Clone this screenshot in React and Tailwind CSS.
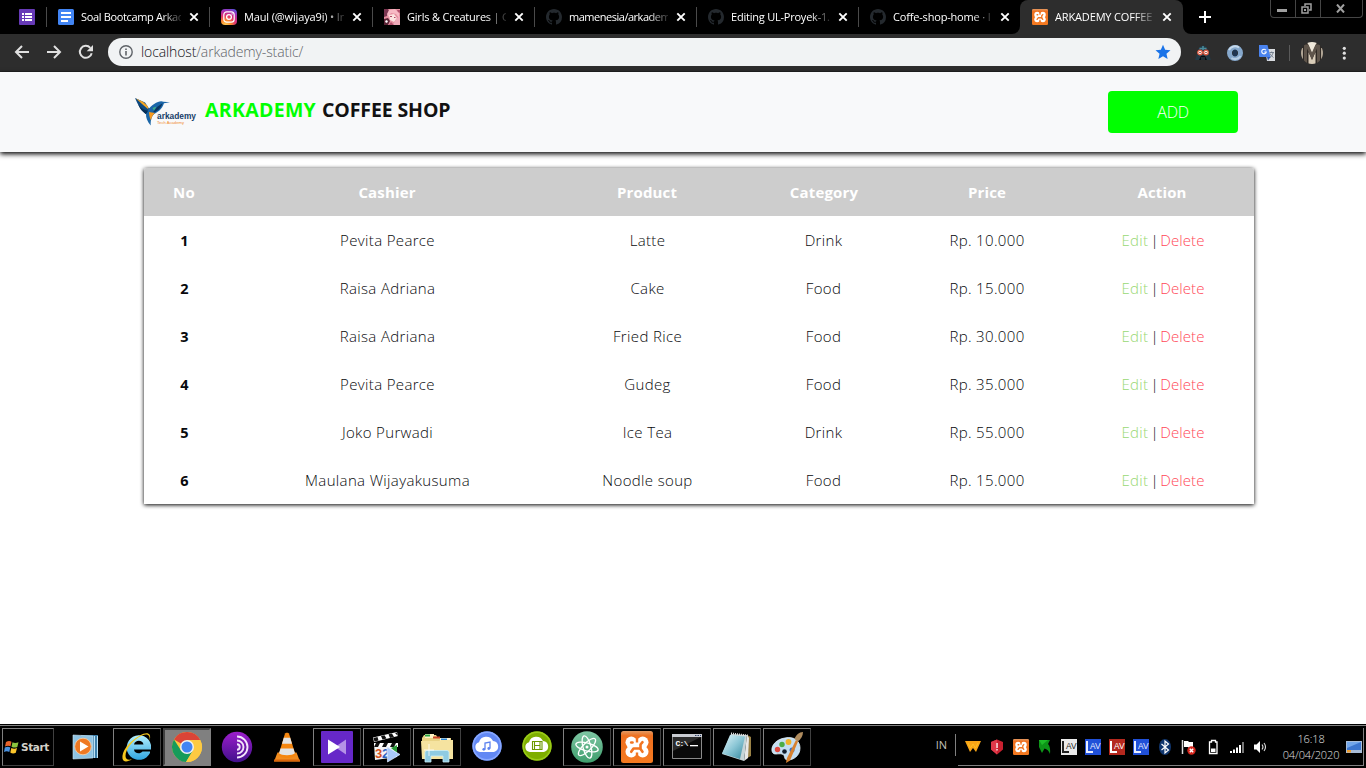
import React from "react";

/* ---------- shared glyphs ---------- */

const Svg = ({ s = 16, vb = "0 0 16 16", className = "", children }) => (
  <svg width={s} height={s} viewBox={vb} className={"shrink-0 " + className}>
    {children}
  </svg>
);

const GITHUB =
  "M8 0C3.58 0 0 3.58 0 8c0 3.54 2.29 6.53 5.47 7.59.4.07.55-.17.55-.38 0-.19-.01-.82-.01-1.49-2.01.37-2.53-.49-2.69-.94-.09-.23-.48-.94-.82-1.13-.28-.15-.68-.52-.01-.53.63-.01 1.08.58 1.23.82.72 1.21 1.87.87 2.33.66.07-.52.28-.87.51-1.07-1.78-.2-3.64-.89-3.64-3.95 0-.87.31-1.59.82-2.15-.08-.2-.36-1.02.08-2.12 0 0 .67-.21 2.2.82.64-.18 1.32-.27 2-.27s1.36.09 2 .27c1.53-1.04 2.2-.82 2.2-.82.44 1.1.16 1.92.08 2.12.51.56.82 1.27.82 2.15 0 3.07-1.87 3.75-3.65 3.95.29.25.54.73.54 1.48 0 1.07-.01 1.93-.01 2.2 0 .21.15.46.55.38A8.01 8.01 0 0 0 16 8c0-4.42-3.58-8-8-8z";

const FormsIcon = () => (
  <Svg>
    <rect width="16" height="16" rx="1" fill="#673ab7" />
    <path d="M3 4h2v2H3zM6 4h7v2H6zM3 7h2v2H3zM6 7h7v2H6zM3 10h2v2H3zM6 10h7v2H6z" fill="#fff" />
  </Svg>
);
const DocsIcon = () => (
  <Svg>
    <rect width="16" height="16" rx="1.5" fill="#4285f4" />
    <path d="M3 3h10v2H3zM3 7h10v2H3zM3 11h7v2H3z" fill="#fff" />
  </Svg>
);
const InstaIcon = () => (
  <Svg>
    <defs>
      <radialGradient id="ig" cx=".28" cy="1.05" r="1.15">
        <stop offset="0" stopColor="#ffd85c" />
        <stop offset=".3" stopColor="#fb8a2d" />
        <stop offset=".55" stopColor="#e0356c" />
        <stop offset=".8" stopColor="#b02bb0" />
        <stop offset="1" stopColor="#5b4fd8" />
      </radialGradient>
    </defs>
    <rect width="16" height="16" rx="4" fill="url(#ig)" />
    <rect x="2.8" y="2.8" width="10.4" height="10.4" rx="3" fill="none" stroke="#fff" strokeWidth="1.2" />
    <circle cx="8" cy="8" r="2.4" fill="none" stroke="#fff" strokeWidth="1.3" />
    <circle cx="11.1" cy="4.9" r=".7" fill="#fff" />
  </Svg>
);
const GirlIcon = () => (
  <Svg>
    <rect width="16" height="16" fill="#e58fa0" />
    <path d="M0 0h4l2 3-3 4-3 1z" fill="#7a3550" />
    <path d="M5 1l6-1 4 4v5l-3-4-5-1-3 4-1-3z" fill="#f7b9c4" />
    <path d="M5 6l5-1 3 4-3 4-4-2z" fill="#fbe3e0" />
    <path d="M0 10l4-1 2 3-2 4H0z" fill="#5a2335" />
    <path d="M2 11l2 1-1 2-2-1z" fill="#fff" />
    <path d="M12 10l4-3v9H9z" fill="#efabba" />
    <path d="M6 7h2v1H6zM10 8h1.500v1H10z" fill="#b04665" />
    <path d="M13 1h3v3l-2-1zM7 13l3 3H5z" fill="#b1506c" />
  </Svg>
);
const GithubIcon = () => (
  <Svg>
    <path d={GITHUB} fill="#24292e" />
  </Svg>
);

const Xampp = ({ s = 16, id }) => (
  <Svg s={s} vb="0 0 32 32">
    <defs>
      <linearGradient id={id} x1="0" y1="0" x2="0" y2="1">
        <stop offset="0" stopColor="#e39a63" />
        <stop offset=".15" stopColor="#ee7020" />
        <stop offset="1" stopColor="#f57a20" />
      </linearGradient>
    </defs>
    <rect width="32" height="32" rx="2.500" fill={"url(#" + id + ")"} />
    <g fill="#fff">
      <circle cx="10.300" cy="11.300" r="5.800" />
      <circle cx="21.700" cy="11.300" r="5.800" />
      <circle cx="10.300" cy="20.700" r="5.800" />
      <circle cx="21.700" cy="20.700" r="5.800" />
      <path d="M9 12h14v8H9z" />
    </g>
    <g fill="none" stroke="#f27522" strokeWidth="2.600" strokeLinecap="round" strokeLinejoin="round">
      <path d="M10.200 11.500h1.300" />
      <path d="M21.500 11.200L19.500 13.500V18L21.500 20.800" />
      <path d="M10.200 20.800L12.500 17.500H19" />
    </g>
    <path d="M16 5v6.500M16 21.500v6" stroke="#f27522" strokeWidth="2.400" />
  </Svg>
);

const CloseX = () => (
  <Svg s={10} vb="0 0 10 10">
    <path d="M1.300 1.300l7.400 7.400M8.700 1.300L1.300 8.700" stroke="#fff" strokeWidth="1.900" />
  </Svg>
);

/* ---------- browser ---------- */

const tabs = [
  { icon: <DocsIcon />, title: "Soal Bootcamp Arkad", w: "w-[163px]", t: "w-[100px]", ls: "tracking-[-0.35px]" },
  { icon: <InstaIcon />, title: "Maul (@wijaya9i) • In", w: "w-[163px]", t: "w-[100px]", ls: "tracking-[-0.14px]" },
  { icon: <GirlIcon />, title: "Girls & Creatures | G", w: "w-[162px]", t: "w-[99px]", ls: "tracking-[-0.2px]" },
  { icon: <GithubIcon />, title: "mamenesia/arkadem", w: "w-[162px]", t: "w-[99px]", ls: "tracking-[-0.48px]" },
  { icon: <GithubIcon />, title: "Editing UL-Proyek-1.", w: "w-[162px]", t: "w-[99px]", ls: "tracking-[-0.22px]" },
  { icon: <GithubIcon />, title: "Coffe-shop-home · I", w: "w-[162px]", t: "w-[99px]", ls: "tracking-[-0.18px]", last: true },
];

const fade = "[mask-image:linear-gradient(to_right,#000_80%,rgba(0,0,0,0.2)_99%)]";

function Tab({ icon, title, w, t, ls, last }) {
  return (
    <div className={"flex h-[34px] shrink-0 items-center pl-[11px] " + w}>
      {icon}
      <div className={"ml-[7px] whitespace-nowrap text-[11px] leading-[18px] text-white " + t + " " + ls + " " + fade}>{title}</div>
      <div className="ml-[8px] flex">
        <CloseX />
      </div>
      {!last && <div className="ml-auto h-5 w-px bg-[#4a4a4a]" />}
    </div>
  );
}

function TabStrip() {
  return (
    <div className="flex h-[34px] bg-black">
      <div className="flex w-[47px] shrink-0 items-center pl-[19px]">
        <FormsIcon />
        <div className="ml-auto h-5 w-px bg-[#4a4a4a]" />
      </div>
      {tabs.map((t) => (
        <Tab key={t.title} {...t} />
      ))}
      <div className="relative -ml-px flex h-[34px] w-[163px] shrink-0 items-center rounded-t-[8px] bg-[#2d2d2d] pl-[12px]">
        <Svg s={8} vb="0 0 8 8" className="absolute -left-[8px] bottom-0">
          <path d="M8 0v8H0a8 8 0 0 0 8-8z" fill="#2d2d2d" />
        </Svg>
        <Svg s={8} vb="0 0 8 8" className="absolute -right-[8px] bottom-0">
          <path d="M0 0v8h8a8 8 0 0 1-8-8z" fill="#2d2d2d" />
        </Svg>
        <Xampp id="xa" />
        <div className={"ml-[7px] w-[99px] whitespace-nowrap text-[11px] leading-[18px] tracking-[-0.15px] text-white " + fade}>
          ARKADEMY COFFEE
        </div>
        <div className="ml-[8px] flex">
          <CloseX />
        </div>
      </div>
      <div className="flex w-[44px] items-center justify-center">
        <Svg s={12} vb="0 0 12 12">
          <path d="M6 0v12M0 6h12" stroke="#fff" strokeWidth="2" />
        </Svg>
      </div>
      <div className="ml-auto mr-[3px] flex h-[18px] w-[93px] rounded-b-[4px] border border-t-0 border-[#454545]">
        <div className="flex w-[25px] justify-center border-r border-[#454545] pr-[2px]">
          <div className="mt-[9px] h-[3px] w-[10px] bg-[#a0a0a0]" />
        </div>
        <div className="flex w-[25px] justify-center border-r border-[#454545] pr-[3px] pt-[3px]">
          <Svg s={11} vb="0 0 11 11">
            <path d="M4 3V1h6v6H8M1 4h6v6H1z" fill="none" stroke="#a0a0a0" strokeWidth="1.500" />
            <path d="M3 6h2v2H3z" fill="#a0a0a0" />
          </Svg>
        </div>
        <div className="flex flex-1 justify-center pr-[2px] pt-[4px]">
          <Svg s={9} vb="0 0 9 9">
            <path d="M1 .5l7 8M8 .5l-7 8" stroke="#a0a0a0" strokeWidth="2" />
          </Svg>
        </div>
      </div>
    </div>
  );
}

function Toolbar() {
  return (
    <div className="flex h-[38px] items-center border-b border-[#242424] bg-[#2d2d2d]">
      <Svg className="mb-px ml-[14px]">
        <path d="M15 8H2.500M8 2L2 8l6 6" fill="none" stroke="#e0e0e0" strokeWidth="2" />
      </Svg>
      <Svg className="mb-px ml-[16px]">
        <path d="M1 8h12.500M8 2l6 6-6 6" fill="none" stroke="#e0e0e0" strokeWidth="2" />
      </Svg>
      <Svg className="mb-px ml-[16px]">
        <path d="M13.700 9.200A6 6 0 1 1 12.300 3.800" fill="none" stroke="#e0e0e0" strokeWidth="2" />
        <path d="M15 1v6.300H8.700z" fill="#e0e0e0" />
      </Svg>
      <div className="mb-px ml-[14px] flex h-7 w-[1073px] items-center rounded-full bg-[#f1f3f4] pl-[11px] pr-[10px]">
        <Svg s={14} vb="0 0 14 14">
          <circle cx="7" cy="7" r="6.200" fill="none" stroke="#5f6368" strokeWidth="1.400" />
          <path d="M6.200 6h1.600v4.500H6.200zM6.200 3.500h1.600V5H6.200z" fill="#5f6368" />
        </Svg>
        <div className="ml-[8px] whitespace-nowrap text-[14px] font-light leading-[20px] tracking-[-0.12px] text-[#5f6368]">
          <span className="text-[#101114]">localhost</span>/arkademy-static/
        </div>
        <Svg className="ml-auto">
          <path d="M8 .8l2.150 4.950 5.350.5-4.050 3.550 1.200 5.250L8 12.250l-4.650 2.800 1.200-5.250L.5 6.250l5.350-.5z" fill="#1a73e8" />
        </Svg>
      </div>
      <Svg className="ml-[14px]">
        <path d="M3 6C3.500 2 6 .8 8 .8S12.500 2 13 6l3 9H0z" fill="#223945" />
        <path d="M8 1v4M4.500 3.500h7" stroke="#4a8c9c" strokeWidth="1.500" />
        <circle cx="5" cy="7.500" r="2.300" fill="#fff" stroke="#e05a40" strokeWidth="1.300" />
        <circle cx="11" cy="7.500" r="2.300" fill="#fff" stroke="#e05a40" strokeWidth="1.300" />
        <circle cx="5" cy="7.500" r=".8" fill="#8d2c1c" />
        <circle cx="11" cy="7.500" r=".8" fill="#8d2c1c" />
        <path d="M6 11h4l2 4H4z" fill="#080c10" />
        <path d="M7 12v3M9 12v3" stroke="#52707a" strokeWidth=".7" />
      </Svg>
      <Svg className="ml-[16px]">
        <circle cx="8" cy="8" r="5.500" fill="none" stroke="#86a8cc" strokeWidth="5" />
        <path d="M2 5a7 7 0 0 1 10-2.500" fill="none" stroke="#c6d9ec" strokeWidth="2" />
        <path d="M13.500 11a6.500 6.500 0 0 1-9 2" fill="none" stroke="#b5cce4" strokeWidth="2" />
        <ellipse cx="8" cy="8" rx="2.500" ry="3.500" fill="#1f3552" />
      </Svg>
      <Svg className="ml-[16px]">
        <path d="M6 4h10v12H8z" fill="#d9dce0" />
        <path d="M0 0h8.500l3 12H1a1 1 0 0 1-1-1z" fill="#4a83ee" />
        <path d="M8 12h3.500L9 15.500z" fill="#2a56b8" />
        <path d="M7 5.300A2.300 2.300 0 1 0 7.300 7H5.300" fill="none" stroke="#fff" strokeWidth="1.100" />
        <path d="M10.500 7.500h4.500M12.700 6.500v1M14 8c-.5 2-1.700 3.500-3 4.500M11 8.500c.7 1.700 2 3 3.500 4" fill="none" stroke="#6d7888" strokeWidth=".9" />
      </Svg>
      <div className="ml-[14px] h-4 w-px bg-[#5a5a5a]" />
      <Svg s={22} vb="0 0 22 22" className="ml-[11px]">
        <clipPath id="av">
          <circle cx="11" cy="11" r="11" />
        </clipPath>
        <g clipPath="url(#av)">
          <path d="M0 0h22v22H0z" fill="#2f2924" />
          <path d="M0 6h2v12H0zM20 6h2v12h-2z" fill="#b0a595" />
          <path d="M6 0h10l-5 12z" fill="#efe8da" />
          <path d="M7.500 10v12h7V10L11 18z" fill="#d8ccb8" />
          <path d="M4.500 21V4h2L11 14l4.500-10h2v17" fill="none" stroke="#5f554b" strokeWidth="3" />
        </g>
      </Svg>
      <Svg className="ml-[13px]">
        <circle cx="8.300" cy="3.300" r="1.600" fill="#e0e0e0" />
        <circle cx="8.300" cy="8.200" r="1.600" fill="#e0e0e0" />
        <circle cx="8.300" cy="13.100" r="1.600" fill="#e0e0e0" />
      </Svg>
    </div>
  );
}

/* ---------- page ---------- */

const rows = [
  ["1", "Pevita Pearce", "Latte", "Drink", "Rp. 10.000"],
  ["2", "Raisa Adriana", "Cake", "Food", "Rp. 15.000"],
  ["3", "Raisa Adriana", "Fried Rice", "Food", "Rp. 30.000"],
  ["4", "Pevita Pearce", "Gudeg", "Food", "Rp. 35.000"],
  ["5", "Joko Purwadi", "Ice Tea", "Drink", "Rp. 55.000"],
  ["6", "Maulana Wijayakusuma", "Noodle soup", "Food", "Rp. 15.000"],
];
const heads = ["No", "Cashier", "Product", "Category", "Price", "Action"];
const cols = "grid grid-cols-[80px_326px_194px_160px_166px_184px] h-12 items-center text-center";

function Logo() {
  return (
    <svg width="62" height="30" viewBox="0 0 62 30" className="shrink-0">
      <path d="M0 1L10 5.500l4 6 3.500-2-1 8-6-.500C6 13 3 8 0 1z" fill="#0e4a80" />
      <path d="M1 1.500l7 3.200 4.500 4.300 1 3.500L7 7z" fill="#f6a623" />
      <path d="M3 7c2 5 4 7.500 8 10l2-3C9 13 6 11 3 7z" fill="#072f57" />
      <path d="M12 19c0-8 6-12 11-14 2-1 4-1 5.500-.3L35 5.300l-6 .9c-2 6-6 8.800-10 10.800z" fill="#1a66a8" />
      <path d="M17.500 16c5-1.500 8.500-5 10-9.800L22 10z" fill="#0b3460" />
      <path d="M17.500 11l4-1.500-2.500 4z" fill="#3fae86" />
      <path d="M11 17l3-3.500 6 2.500c-3 3-4.500 6-4.300 12.500-3.500-4-4.900-8-4.700-11.500z" fill="#1a65a6" />
      <path d="M14 15l6 1c-2.500 2-3.500 4-4 7.500-1.500-3-2-6-2-8.500z" fill="#f79a20" />
      <text x="22" y="21.500" textLength="39" lengthAdjust="spacingAndGlyphs" fontFamily="Liberation Sans" fontWeight="700" fontSize="9" fill="#163e68">
        arkademy
      </text>
      <text x="22" y="26.700" textLength="27" lengthAdjust="spacingAndGlyphs" fontFamily="Liberation Sans" fontSize="4.300" fill="#f08b2c">
        Tech Academy
      </text>
    </svg>
  );
}

function Page() {
  return (
    <main className="flex h-[652px] flex-col bg-white text-[#212529]">
      <nav className="z-10 flex h-20 shrink-0 items-center justify-between bg-[#f8f9fa] pl-[135px] pr-[128px] shadow-[0_2px_5px_#000]">
        <div className="flex items-center">
          <Logo />
          <div className="mb-[4px] ml-[8px] flex whitespace-nowrap text-[19.500px] font-bold leading-[30px] text-[#121212]">
            <span className="tracking-[0.3px] text-[#00ff00]">ARKADEMY</span>
            <span className="ml-[6px] tracking-[-0.12px]">COFFEE SHOP</span>
          </div>
        </div>
        <button className="h-[42px] w-[130px] rounded-[4px] bg-[#00ff00] text-[16px] font-light tracking-[-0.3px] text-white">ADD</button>
      </nav>
      <div className="ml-[144px] mt-4 w-[1110px] overflow-hidden rounded-t-[2px] shadow-[0_1px_4px_#000]">
        <div className={cols + " bg-[#cdcdcd] text-[15px] font-bold tracking-[0.15px] text-white"}>
          {heads.map((h) => (
            <div key={h}>{h}</div>
          ))}
        </div>
        {rows.map((r) => (
          <div key={r[0]} className={cols + " bg-white text-[15px] font-light tracking-[0.35px] text-[#08090c]"}>
            <div className="pl-px pt-px text-[14.500px] font-bold tracking-normal">{r[0]}</div>
            <div className="pl-px">{r[1]}</div>
            <div className="pl-px">{r[2]}</div>
            <div className="pr-px">{r[3]}</div>
            <div>{r[4]}</div>
            <div className="whitespace-nowrap pl-[2px]">
              <span className="text-[#98d873]">Edit</span>
              <span className="mx-[-1.500px] tracking-[-0.4px]"> | </span>
              <span className="tracking-[0.1px] text-[#ff4757]">Delete</span>
            </div>
          </div>
        ))}
      </div>
    </main>
  );
}

/* ---------- taskbar icons ---------- */

const S32 = ({ children }) => (
  <Svg s={32} vb="0 0 32 32">
    {children}
  </Svg>
);

const Wmp = () => (
  <S32>
    <path d="M10 4h17v23H10z" fill="#3c7faa" />
    <path d="M26.500 5v22M23.500 5v22" stroke="#bfe2f5" strokeWidth="1" />
    <path d="M2 4l20 1v22l-20 1z" fill="#8fc3e2" stroke="#d0e8f4" strokeWidth=".6" />
    <circle cx="12" cy="15.500" r="8.300" fill="#ef7923" stroke="#ffd0a2" strokeWidth=".8" />
    <path d="M9 10.500l8.500 5L9 20.500z" fill="#fff" />
  </S32>
);
const Ie = () => (
  <S32>
    <defs>
      <linearGradient id="ie" x1="0" y1="0" x2="0" y2="1">
        <stop offset="0" stopColor="#b4f0ff" />
        <stop offset="1" stopColor="#2fa5df" />
      </linearGradient>
    </defs>
    <path d="M29 22a12.300 12.300 0 1 1 1-8v4.500H13c.3 4.200 6 5 8.500 2h7.500zM13 13.500h9.500c-.7-5-8.500-5-9.500 0z" fill="url(#ie)" fillRule="evenodd" />
    <path d="M28.500 10C31 2 26 .5 19 4.500 7 11 .5 21 1.500 27.500c.8 4 5 3.500 9.500 .8-4 1.200-6.500 0-6.500-3.300C4.500 18 12 8.500 21 4.500c6-2.500 8.500 0 7.500 5.500z" fill="#f6c81d" />
  </S32>
);
const ChromeI = () => (
  <S32>
    <circle cx="16" cy="16" r="15" fill="#fcc83f" />
    <path d="M16 16L3 8.500A15 15 0 0 1 29.200 9H16z" fill="#db4437" />
    <path d="M3 8.500A15 15 0 0 0 15 31l7-11.500-6-3.500-6 3.500z" fill="#169b5b" />
    <path d="M16 9h13.200A15 15 0 0 1 15 31l7-11.500z" fill="#fdca42" />
    <circle cx="16" cy="16" r="7" fill="#f1f1f1" />
    <circle cx="16" cy="16" r="5.500" fill="#4285f4" />
  </S32>
);
const Tor = () => (
  <S32>
    <defs>
      <linearGradient id="tor" x1="0" y1="0" x2="0" y2="1">
        <stop offset="0" stopColor="#9c1ecb" />
        <stop offset="1" stopColor="#42108c" />
      </linearGradient>
    </defs>
    <circle cx="16" cy="16" r="15.200" fill="url(#tor)" />
    <path d="M16 5.500a10.500 10.500 0 0 1 0 21M16 9.500a6.500 6.500 0 0 1 0 13M16 13.300a2.700 2.700 0 0 1 0 5.400" fill="none" stroke="#f3e5fb" strokeWidth="1.900" />
  </S32>
);
const Vlc = () => (
  <S32>
    <path d="M6.500 21.500h19L29 30.500H3z" fill="#f28c1e" />
    <path d="M14 2.500c.5-1 3.500-1 4 0L24.500 24c-2 4-15 4-17 0z" fill="#f5860f" />
    <path d="M12.800 6.700h6.400l1.800 6H11zM9.500 17.500h13l1.400 4.700c-2 2.600-14 2.600-15.800 0z" fill="#e4e4e4" />
    <path d="M3 28.500h26v2H3z" fill="#d9650a" />
  </S32>
);
const Kmp = () => (
  <S32>
    <rect width="32" height="32" rx="1" fill="#6628c8" />
    <path d="M25 8.500v15L14 16z" fill="#b492e6" />
    <path d="M7 8.500v15L19 16z" fill="#fff" />
  </S32>
);
const Mpc = () => (
  <S32>
    <path d="M3 12h23v14l-22 3z" fill="#f4f4f4" />
    <path d="M2 6.500L26 1l1 4L3 11z" fill="#fff" />
    <path d="M2.500 7l4-1 1 3.500-4 1zM10 5l3.500-.8 2 3.300-4 1zM17.500 3.300l3.500-.8 2 3.400-4 1zM24 2l2-.5 1 3.500z" fill="#111" />
    <path d="M3 12h24v4H3z" fill="#fff" />
    <path d="M5 12h4l-2 4H3zM13 12h4l-2 4h-4zM21 12h4l-2 4h-4z" fill="#111" />
    <text x="4" y="27" fontFamily="Liberation Sans" fontWeight="700" fontSize="13" fill="#d6521b">3</text>
    <text x="11" y="26.500" fontFamily="Liberation Sans" fontWeight="700" fontSize="13" fill="#2962c4">2</text>
    <path d="M20 17l6-3v8z" fill="#2c9b3a" />
    <path d="M16 16l13 7.500L16.500 31z" fill="#a9c8fa" stroke="#e3eeff" strokeWidth=".7" />
  </S32>
);
const Folder = () => (
  <S32>
    <path d="M3 4h12l2 3h13v21H1V7z" fill="#e9d385" />
    <path d="M4 3h9v4H4z" fill="#fff3c5" />
    <path d="M4 3.500h5v2H4z" fill="#27a243" />
    <path d="M12 5.500h7v2h-7z" fill="#c9452a" />
    <path d="M19 7h10v3H19z" fill="#fff6d6" />
    <path d="M20 7.500h6v1.500h-6z" fill="#2a87d8" />
    <path d="M0 10h18l2-1h12v19H1z" fill="#f5e3a0" />
    <path d="M4 31V21.500q0-2 2-2h20q2 0 2 2V31h-6v-6H10v6z" fill="#8fcbe2" stroke="#c9edf8" strokeWidth=".8" />
    <path d="M8 13v12M3 19h10" stroke="#fff" strokeWidth="1" opacity=".8" />
  </S32>
);
const CLOUD = "M9 22a5 5 0 0 1-1-9.800A7.500 7.500 0 0 1 22 11a5.600 5.600 0 0 1 1 11z";
const CloudMusic = () => (
  <S32>
    <circle cx="16" cy="15" r="14.700" fill="#6288f4" />
    <circle cx="16" cy="15" r="13.800" fill="none" stroke="#88a8ff" strokeWidth="1.500" />
    <path d={CLOUD} fill="#fff" transform="translate(0 -1)" />
    <path d="M14 18.500V12l5-1v6.500" fill="none" stroke="#5c82ef" strokeWidth="1.300" />
    <circle cx="12.800" cy="18.300" r="1.400" fill="#5c82ef" />
    <circle cx="17.800" cy="17.500" r="1.400" fill="#5c82ef" />
  </S32>
);
const CloudFilm = () => (
  <S32>
    <circle cx="16" cy="15" r="14.700" fill="#7eae00" />
    <circle cx="16" cy="15" r="13.800" fill="none" stroke="#9acb18" strokeWidth="1.500" />
    <path d={CLOUD} fill="#fff" transform="translate(0 -1)" />
    <path d="M11.500 10.500h9.500v8h-9.500zM13 14.500h6.500M13.500 10.500v8M19 10.500v8" fill="none" stroke="#6c9900" strokeWidth="1.100" />
  </S32>
);
const Atom = () => (
  <S32>
    <defs>
      <linearGradient id="atm" x1="0" y1="0" x2="0" y2="1">
        <stop offset="0" stopColor="#7fc7a4" />
        <stop offset="1" stopColor="#3f9e6c" />
      </linearGradient>
    </defs>
    <circle cx="16" cy="16" r="15.800" fill="url(#atm)" />
    <g fill="none" stroke="#fff" strokeWidth="1.300">
      <ellipse cx="16" cy="16" rx="4" ry="11.500" transform="rotate(-15 16 16)" />
      <ellipse cx="16" cy="16" rx="4" ry="11.500" transform="rotate(45 16 16)" />
      <ellipse cx="16" cy="16" rx="4" ry="11.500" transform="rotate(105 16 16)" />
    </g>
    <circle cx="16" cy="16" r="1.500" fill="#fff" />
  </S32>
);
const Cmd = () => (
  <S32>
    <path d="M1.500 4.500h29v23h-29z" fill="#0a0a0a" stroke="#8a8a8a" />
    <path d="M1 3h30v3H1z" fill="#c9ccd2" />
    <path d="M24 4h1.500v1H24zM26.500 4H28v1h-1.500zM29 4h1v1h-1z" fill="#31446b" />
    <path d="M2 6h28L2 20z" fill="#2b2b2b" />
    <text x="4.500" y="15" fontFamily="Liberation Mono" fontWeight="700" fontSize="8" textLength="13" fill="#fff">C:\</text>
    <path d="M19 14h8v1.300h-8z" fill="#fff" />
  </S32>
);
const Notepad = () => (
  <S32>
    <defs>
      <linearGradient id="np" x1="0" y1="0" x2="1" y2="1">
        <stop offset="0" stopColor="#e4f5f9" />
        <stop offset=".5" stopColor="#8cc7d6" />
        <stop offset="1" stopColor="#34889e" />
      </linearGradient>
    </defs>
    <path d="M26 4l4 2v19l-6 3z" fill="#9a8246" />
    <path d="M26 4l2 3-1 20-4 3z" fill="#e8e8e8" />
    <path d="M10 3l16 1-3 26L1 23z" fill="#c7d5d8" />
    <path d="M9 4l15 1.500L19 28 1 22.500z" fill="url(#np)" />
    <path d="M10 2.500l17 2" stroke="#dedede" strokeWidth="2" strokeDasharray="1 1" />
  </S32>
);
const Paint = () => (
  <S32>
    <path d="M14 7c9-2 15 3 15 10 0 8-7 12-12 12-5 0-2-5-6-6-4-1-9 2-10-3C0 14 6 8 14 7z" fill="#c4def2" stroke="#eaf6fd" strokeWidth=".8" />
    <circle cx="6.500" cy="18.500" r="2.700" fill="#e0483f" />
    <circle cx="11" cy="13.500" r="2.700" fill="#4cad45" />
    <circle cx="17.500" cy="11" r="2.900" fill="#f2b32a" />
    <circle cx="13.500" cy="20.500" r="2.300" fill="#111d2c" />
    <circle cx="21" cy="19" r="2.500" fill="#3a6fc4" />
    <path d="M25 9l2 1.500-8 19-4 2.500 1-5z" fill="#d8812f" />
    <path d="M23.500 8C25 4 28 1 32 1c0 4-2 7-5 9.500z" fill="#b08c5e" />
  </S32>
);

const apps = [
  { i: <Wmp />, m: "plain" },
  { i: <Ie />, m: "run" },
  { i: <ChromeI />, m: "active" },
  { i: <Tor />, m: "plain" },
  { i: <Vlc />, m: "plain" },
  { i: <Kmp />, m: "run" },
  { i: <Mpc />, m: "run" },
  { i: <Folder />, m: "run" },
  { i: <CloudMusic />, m: "plain" },
  { i: <CloudFilm />, m: "plain" },
  { i: <Atom />, m: "run" },
  { i: <Xampp s={32} id="xb" />, m: "run" },
  { i: <Cmd />, m: "run" },
  { i: <Notepad />, m: "run" },
  { i: <Paint />, m: "run" },
];
const modes = {
  plain: "border border-transparent",
  run: "border border-t-[#808080] border-l-[#808080] border-r-[#404040] border-b-[#404040]",
  active: "border-2 border-t-[#404040] border-l-[#404040] border-r-[#808080] border-b-[#808080] bg-[#808080]",
};

const Lav = ({ bg, fg }) => (
  <Svg>
    <path d="M0 0h16v16H0z" fill={bg} />
    <path d="M2 2v11h6" fill="none" stroke={fg} strokeWidth="2" />
    <text x="5" y="9.500" fontFamily="Liberation Sans" fontSize="8.500" textLength="10.500" lengthAdjust="spacingAndGlyphs" fill={fg}>
      AV
    </text>
  </Svg>
);

const tray = [
  <Svg>
    <path d="M0 2h16l-5 11-3-4-3 4z" fill="#f9a516" />
    <path d="M3 4l2.500 5L8 5l2.500 4L13 4" fill="none" stroke="#ffbe24" strokeWidth="1" />
  </Svg>,
  <Svg>
    <path d="M8 .5l6 2.500v7.500l-6 5-6-5V3z" fill="#c8202f" />
    <path d="M8 .5V15.500l-6-5V3z" fill="#e0394a" />
    <path d="M7.400 4h1.300v5H7.400zM7.400 10h1.300v1.500H7.400z" fill="#fff" />
  </Svg>,
  <Xampp id="xc" />,
  <Svg>
    <path d="M2 1h11l-2 4c2 2 2.500 6 2 10-1-3-3-5-5.500-5.500L5 14 2 8z" fill="#0d9518" />
    <path d="M2 1h9L5 6z" fill="#1dbb28" />
  </Svg>,
  <Lav bg="#eaeaea" fg="#222" />,
  <Lav bg="#2050d8" fg="#e8eeff" />,
  <Lav bg="#b5281e" fg="#fff" />,
  <Lav bg="#2050d8" fg="#e8eeff" />,
  <Svg>
    <ellipse cx="8" cy="8" rx="6" ry="8" fill="#10366e" />
    <path d="M4.500 5l7 6L8 14V2l3.500 3-7 6" fill="none" stroke="#fff" strokeWidth="1.200" />
  </Svg>,
  <Svg>
    <path d="M1.500 1v14" stroke="#ddd" strokeWidth="1.500" />
    <path d="M3 2h4l1 1h4v6H8L7 8H3z" fill="#fff" />
    <circle cx="10.500" cy="11.500" r="4.200" fill="#d5261d" />
    <path d="M8.800 9.800l3.400 3.400M12.200 9.800l-3.400 3.400" stroke="#fff" strokeWidth="1.400" />
  </Svg>,
  <Svg>
    <path d="M6.500 1.500h4V3H12v11.500H4.500V3h2z" fill="none" stroke="#fff" strokeWidth="1.300" />
    <path d="M6 9.500h4.500v3.500H6z" fill="#fff" />
  </Svg>,
  <Svg>
    <path d="M1 12h2v2H1zM4 10.500h2V14H4zM7 8.500h2V14H7zM10 6h2v8h-2z" fill="#fff" />
    <path d="M13 3h2v11h-2z" fill="#777" />
  </Svg>,
  <Svg>
    <path d="M1 5.500h2.500L7 2v12l-3.500-3.500H1z" fill="#fff" />
    <path d="M9 5.500q2 2.500 0 5M11 4q3 4 0 8" fill="none" stroke="#ddd" strokeWidth="1.100" />
  </Svg>,
];

function Taskbar() {
  return (
    <footer className="flex h-[44px] bg-black pt-px">
      <div className="flex w-full border-t border-[#808080] pt-[2px]">
        <div className="ml-[2px] flex h-[38px] w-[52px] items-center border border-b-[#404040] border-l-[#808080] border-r-[#404040] border-t-[#808080] pl-px">
          <Svg>
            <path d="M2 3q3-2 5.500-.3L6.500 7.300Q4 6 1 7.500z" fill="#e8642c" />
            <path d="M8.500 3.200q2.500 1.600 6 0L13.300 8q-3 1.300-5.800-.3z" fill="#8cc63e" />
            <path d="M.8 8.600q3-1.600 5.500-.2l-1 4.600q-2.500-1.500-5.300 0z" fill="#4a92e0" />
            <path d="M7.300 8.900q2.700 1.500 5.700.1l-1.200 4.800q-3 1.300-5.500-.3z" fill="#fbc62c" />
          </Svg>
          <span className="ml-px font-['DejaVu_Sans',sans-serif] text-[10.500px] font-bold leading-4 tracking-[-0.400px] text-[#d4d0c8]">Start</span>
        </div>
        <div className="ml-[9px] flex gap-[2px]">
          {apps.map((a, k) => (
            <div key={k} className={"flex h-[38px] w-12 items-center justify-center " + modes[a.m]}>
              {a.i}
            </div>
          ))}
        </div>
        <div className="ml-auto flex h-[38px]">
          <span className="mt-[9px] text-[11px] leading-4 text-[#c4c0b8]">IN</span>
          <div className="ml-[8px] mt-[6px] h-[22px] w-px bg-[#808080]" />
          <div className="ml-[2px] mr-[2px] flex w-[406px] items-center border-b border-r border-[#808080] pl-[7px]">
            <div className="flex gap-2">
              {tray.map((t, k) => (
                <React.Fragment key={k}>{t}</React.Fragment>
              ))}
            </div>
            <div className="ml-[10px] w-[64px] whitespace-nowrap text-center text-[11px] font-light leading-4 tracking-[-0.1px] text-[#e0e0e0]">
              <div>16:18</div>
              <div>04/04/2020</div>
            </div>
            <Svg className="ml-[3px]">
              <path d="M0 2h16v12H0z" fill="#a9bdd8" />
              <path d="M1 3h14v8H1z" fill="#3c76cf" />
              <path d="M1 3h14L1 9z" fill="#72a6ea" />
              <path d="M1 11h4v2.500H1z" fill="#f0a030" />
            </Svg>
          </div>
        </div>
      </div>
    </footer>
  );
}

export default function App() {
  return (
    <div className="h-[768px] w-[1366px] overflow-hidden bg-black font-['Open_Sans','Noto_Sans',sans-serif]">
      <TabStrip />
      <Toolbar />
      <Page />
      <Taskbar />
    </div>
  );
}
